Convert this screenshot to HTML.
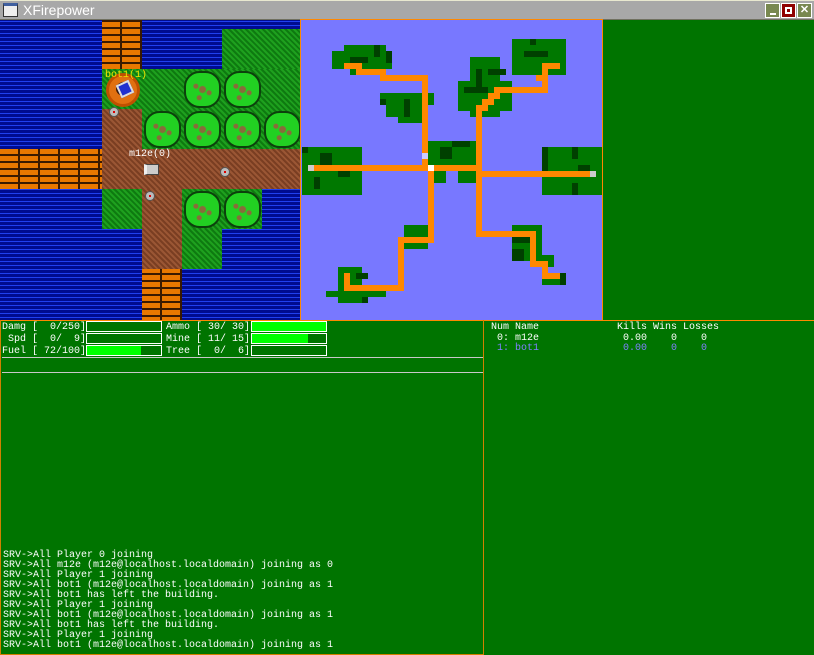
<!DOCTYPE html>
<html><head><meta charset="utf-8"><style>
*{margin:0;padding:0;box-sizing:border-box}
body{width:814px;height:655px;background:#007400;position:relative;overflow:hidden;font-family:"Liberation Mono",monospace;font-size:10px;color:#fff}
.a{position:absolute}
.t{position:absolute;white-space:pre;font-family:"Liberation Mono",monospace;font-size:10px;line-height:10px}
.w{background:#0818b8;background-image:repeating-linear-gradient(0deg,#000c90 0 2px,#2040f0 2px 3px,#000c90 3px 4px)}
.b{background:#e87800;background-image:repeating-linear-gradient(0deg,transparent 0 5px,#3a1a00 5px 7px),repeating-linear-gradient(90deg,transparent 0 18px,#3a1a00 18px 20px)}
.d{background:#8a4a2a;background-image:repeating-linear-gradient(45deg,#7a3e22 0 2px,#9a5634 2px 4px)}
.g{background:#148c14;background-image:repeating-linear-gradient(45deg,#0e7a10 0 2px,#1ea01e 2px 4px)}
.tr{position:absolute;width:37px;height:37px;border-radius:42%;background:#22d022;border:2px solid #0c400c;background-image:radial-gradient(circle at 50% 50%,#8a6a3a 0 3px,transparent 4px),radial-gradient(circle at 30% 40%,#8a6a3a 0 2px,transparent 3px),radial-gradient(circle at 70% 60%,#8a6a3a 0 2px,transparent 3px),radial-gradient(circle at 40% 75%,#8a6a3a 0 2px,transparent 3px)}
.mn{position:absolute;width:10px;height:10px;border-radius:50%;background:#bbb;border:1px solid #555}
.mn::after{content:"";position:absolute;left:3px;top:3px;width:2px;height:2px;background:#d00}
.bar{position:absolute;height:11px;border:1px solid #fff}
.bar i{position:absolute;left:0;top:0;bottom:0;background:#00ff00}
</style></head><body>
<div class="a" style="left:0;top:0;width:814px;height:20px;background:#a8a8a8;border-top:1px solid #e8e8d0;border-bottom:1px solid #707060"></div>
<div class="a" style="left:3px;top:3px;width:15px;height:14px;background:#eee;border:1px solid #333;border-top:3px solid #4060a0"></div>
<div class="a" style="left:23px;top:1px;font-family:'Liberation Sans',sans-serif;font-size:14px;color:#fff;line-height:18px">XFirepower</div>
<div class="a" style="left:765px;top:3px;width:15px;height:15px;background:#788850;border:1px solid #fff"><div class="a" style="left:4px;top:9px;width:6px;height:2px;background:#fff"></div></div>
<div class="a" style="left:781px;top:3px;width:15px;height:15px;background:#900000;border:1px solid #fff"><div class="a" style="left:3px;top:3px;width:7px;height:7px;border:2px solid #fff"></div></div>
<div class="a" style="left:797px;top:3px;width:15px;height:15px;background:#788850;border:1px solid #fff;color:#fff;font:bold 11px 'Liberation Sans',sans-serif;text-align:center;line-height:13px">✕</div>

<div class="a" style="left:0;top:20px;width:300px;height:300px;overflow:hidden">
 <div class="a w" style="left:0;top:0;width:300px;height:300px"></div>
 <div class="a b" style="left:102px;top:-31px;width:40px;height:80px"></div>
 <div class="a g" style="left:222px;top:9px;width:78px;height:40px"></div>
 <div class="a g" style="left:102px;top:49px;width:198px;height:40px"></div>
 <div class="a d" style="left:102px;top:89px;width:40px;height:40px"></div>
 <div class="a g" style="left:142px;top:89px;width:158px;height:40px"></div>
 <div class="a b" style="left:0;top:129px;width:102px;height:40px"></div>
 <div class="a d" style="left:102px;top:129px;width:198px;height:40px"></div>
 <div class="a g" style="left:102px;top:169px;width:40px;height:40px"></div>
 <div class="a d" style="left:142px;top:169px;width:40px;height:80px"></div>
 <div class="a g" style="left:182px;top:169px;width:80px;height:40px"></div>
 <div class="a g" style="left:182px;top:209px;width:40px;height:40px"></div>
 <div class="a b" style="left:142px;top:249px;width:40px;height:60px"></div>
 <div class="tr" style="left:184px;top:51px"></div><div class="tr" style="left:224px;top:51px"></div>
 <div class="tr" style="left:144px;top:91px"></div><div class="tr" style="left:184px;top:91px"></div><div class="tr" style="left:224px;top:91px"></div><div class="tr" style="left:264px;top:91px"></div>
 <div class="tr" style="left:184px;top:171px"></div><div class="tr" style="left:224px;top:171px"></div>
 <div class="a" style="left:106px;top:53px;width:34px;height:34px;border-radius:50%;background:#e07010;border:3px solid #c05000"><div class="a" style="left:7px;top:6px;width:16px;height:14px;border-radius:50%;background:#3a1a08"></div></div>
 <div class="a" style="left:118px;top:62px;width:14px;height:14px;background:#2030d0;border:2px solid #ddd;transform:rotate(-25deg)"></div>
 <div class="mn" style="left:109px;top:87px"></div>
 <div class="mn" style="left:220px;top:147px"></div>
 <div class="mn" style="left:145px;top:171px"></div>
 <div class="a" style="left:144px;top:144px;width:15px;height:11px;background:#ccc;border:1px solid #444;border-left:3px solid #eee"></div>
 <div class="t" style="left:105px;top:51px;color:#f0e000">bot1(1)</div>
 <div class="t" style="left:129px;top:130px">m12e(0)</div>
</div>

<svg class="a" style="left:300px;top:19px" width="304" height="303" viewBox="300 19 304 303">
<rect x="300.5" y="19.5" width="302" height="301" fill="#7878ff" stroke="#ff8800"/>
<g fill="#007800">
<rect x="344" y="45" width="42" height="18"/><rect x="332" y="51" width="60" height="18"/><rect x="350" y="69" width="30" height="6"/>
<rect x="386" y="99" width="42" height="18"/><rect x="380" y="93" width="54" height="12"/><rect x="398" y="117" width="24" height="6"/>
<rect x="422" y="141" width="54" height="30"/><rect x="434" y="171" width="12" height="12"/><rect x="458" y="171" width="18" height="12"/>
<rect x="470" y="57" width="30" height="60"/><rect x="458" y="81" width="54" height="30"/>
<rect x="512" y="39" width="54" height="36"/>
<rect x="302" y="147" width="60" height="48"/>
<rect x="542" y="147" width="60" height="48"/>
<rect x="404" y="225" width="24" height="18"/><rect x="404" y="243" width="24" height="6"/>
<rect x="338" y="267" width="24" height="24"/><rect x="326" y="291" width="60" height="6"/><rect x="338" y="297" width="30" height="6"/>
<rect x="512" y="225" width="30" height="36"/><rect x="536" y="255" width="18" height="12"/><rect x="542" y="279" width="24" height="6"/>
</g>
<g fill="#004000">
<rect x="374" y="45" width="6" height="12"/><rect x="350" y="57" width="18" height="6"/><rect x="386" y="51" width="6" height="12"/>
<rect x="404" y="99" width="6" height="18"/><rect x="380" y="99" width="6" height="6"/>
<rect x="452" y="141" width="18" height="6"/><rect x="440" y="147" width="12" height="12"/>
<rect x="476" y="69" width="6" height="18"/><rect x="488" y="69" width="18" height="6"/><rect x="464" y="87" width="24" height="6"/>
<rect x="524" y="51" width="24" height="6"/><rect x="530" y="39" width="6" height="6"/>
<rect x="302" y="147" width="6" height="6"/><rect x="320" y="153" width="12" height="12"/><rect x="314" y="177" width="6" height="12"/><rect x="338" y="171" width="12" height="6"/>
<rect x="542" y="147" width="6" height="30"/><rect x="572" y="147" width="6" height="12"/><rect x="578" y="165" width="12" height="6"/><rect x="572" y="183" width="6" height="12"/>
<rect x="512" y="237" width="18" height="6"/><rect x="512" y="249" width="12" height="12"/><rect x="560" y="273" width="6" height="12"/>
<rect x="356" y="273" width="12" height="6"/><rect x="362" y="297" width="6" height="6"/>
</g>
<g fill="#ff8800">
<rect x="344" y="63" width="18" height="6"/><rect x="356" y="69" width="30" height="6"/><rect x="380" y="75" width="48" height="6"/>
<rect x="422" y="75" width="6" height="90"/>
<rect x="314" y="165" width="168" height="6"/>
<rect x="428" y="171" width="6" height="72"/><rect x="398" y="237" width="36" height="6"/><rect x="398" y="237" width="6" height="54"/>
<rect x="344" y="285" width="60" height="6"/><rect x="344" y="273" width="6" height="18"/>
<rect x="476" y="105" width="6" height="132"/><rect x="476" y="231" width="60" height="6"/><rect x="530" y="231" width="6" height="36"/>
<rect x="530" y="261" width="18" height="6"/><rect x="542" y="261" width="6" height="18"/><rect x="542" y="273" width="18" height="6"/>
<rect x="476" y="171" width="114" height="6"/>
<rect x="476" y="105" width="12" height="6"/><rect x="482" y="99" width="12" height="6"/><rect x="488" y="93" width="12" height="6"/><rect x="494" y="87" width="54" height="6"/>
<rect x="542" y="63" width="6" height="30"/><rect x="542" y="63" width="18" height="6"/><rect x="536" y="75" width="6" height="6"/>
</g>
<rect x="428" y="165" width="6" height="6" fill="#fff"/><rect x="422" y="153" width="6" height="6" fill="#ccccff"/>
<rect x="308" y="165" width="6" height="6" fill="#ccc"/><rect x="590" y="171" width="6" height="6" fill="#ccc"/>
</svg>

<div class="a" style="left:0;top:320px;width:814px;height:1px;background:#ff8800"></div>
<div class="a" style="left:0;top:320px;width:484px;height:335px;border:1px solid #d08000;border-top:none"></div>
<div class="a" style="left:483px;top:320px;width:1px;height:335px;background:#d08000"></div>
<div class="t" style="left:2px;top:322px;line-height:12px">Damg [  0/250]
 Spd [  0/  9]
Fuel [ 72/100]</div>
<div class="t" style="left:166px;top:322px;line-height:12px">Ammo [ 30/ 30]
Mine [ 11/ 15]
Tree [  0/  6]</div>
<div class="bar" style="left:86px;top:321px;width:76px"></div>
<div class="bar" style="left:86px;top:333px;width:76px"></div>
<div class="bar" style="left:86px;top:345px;width:76px"><i style="width:54px"></i></div>
<div class="bar" style="left:251px;top:321px;width:76px"><i style="width:74px"></i></div>
<div class="bar" style="left:251px;top:333px;width:76px"><i style="width:56px"></i></div>
<div class="bar" style="left:251px;top:345px;width:76px"></div>
<div class="a" style="left:2px;top:357px;width:481px;height:1px;background:#c8c8c8"></div>
<div class="a" style="left:2px;top:372px;width:481px;height:1px;background:#c8c8c8"></div>

<div class="t" style="left:491px;top:323px">Num Name             Kills Wins Losses</div>
<div class="t" style="left:491px;top:334px"> 0: m12e              0.00    0    0</div>
<div class="t" style="left:491px;top:344px;color:#8080ff"> 1: bot1              0.00    0    0</div>

<div class="t" style="left:3px;top:551px">SRV->All Player 0 joining
SRV->All m12e (m12e@localhost.localdomain) joining as 0
SRV->All Player 1 joining
SRV->All bot1 (m12e@localhost.localdomain) joining as 1
SRV->All bot1 has left the building.
SRV->All Player 1 joining
SRV->All bot1 (m12e@localhost.localdomain) joining as 1
SRV->All bot1 has left the building.
SRV->All Player 1 joining
SRV->All bot1 (m12e@localhost.localdomain) joining as 1</div>
</body></html>
